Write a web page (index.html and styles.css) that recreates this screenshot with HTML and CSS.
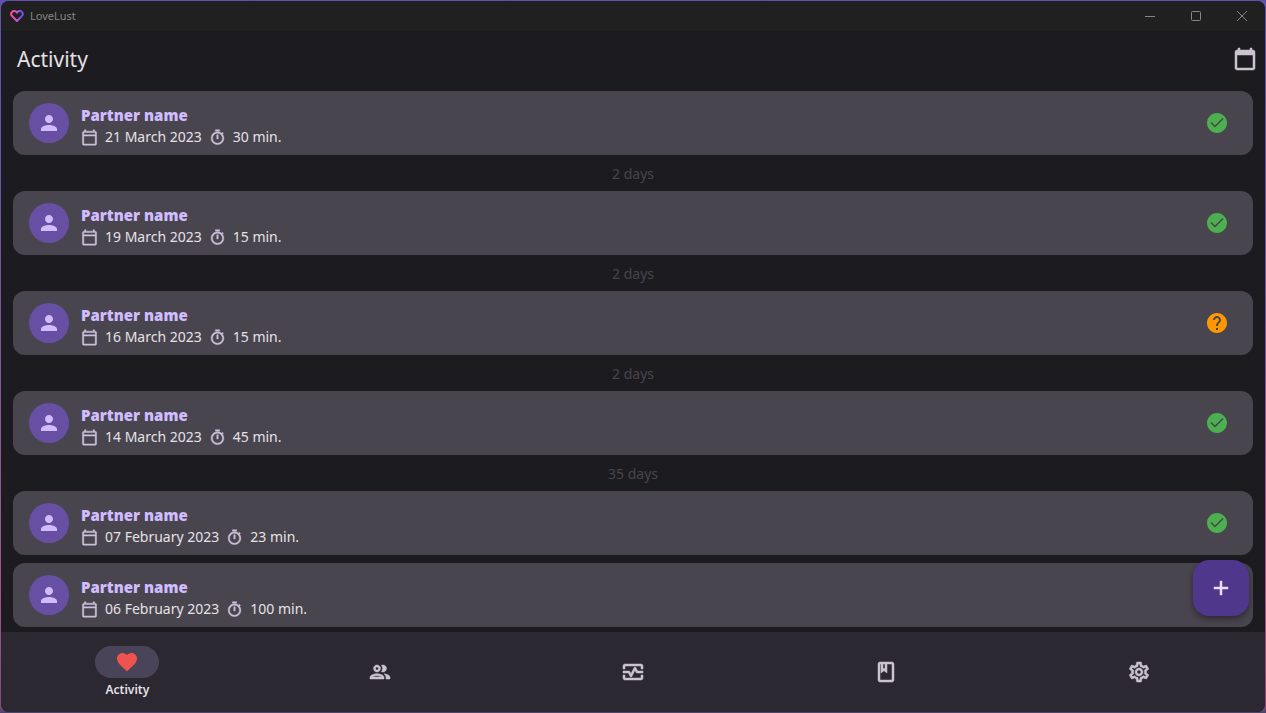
FILE: index.html
```
<!DOCTYPE html>
<html lang="en">
<head>
<meta charset="utf-8">
<title>LoveLust</title>
<link rel="stylesheet" href="styles.css">
</head>
<body>
<svg class="sprite" aria-hidden="true">
  <defs>
    <linearGradient id="logo-tint" x1="0" y1="0" x2="1" y2="0">
      <stop offset="0" stop-color="#ff4f9a"/>
      <stop offset="0.5" stop-color="#c850d8"/>
      <stop offset="1" stop-color="#5b55e8"/>
    </linearGradient>
    <symbol id="person" viewBox="0 0 24 24"><path d="M12 12c2.21 0 4-1.79 4-4s-1.79-4-4-4-4 1.79-4 4 1.79 4 4 4zm0 2c-2.67 0-8 1.34-8 4v2h16v-2c0-2.66-5.33-4-8-4z"/></symbol>
    <symbol id="calendar" viewBox="0 0 24 24"><path d="M20 3h-1V1h-2v2H7V1H5v2H4c-1.1 0-2 .9-2 2v16c0 1.1.9 2 2 2h16c1.1 0 2-.9 2-2V5c0-1.1-.9-2-2-2zm0 18H4V8h16v13z"/></symbol>
    <symbol id="date" viewBox="0 0 24 24"><path d="M20 3h-1V1h-2v2H7V1H5v2H4c-1.1 0-2 .9-2 2v16c0 1.1.9 2 2 2h16c1.1 0 2-.9 2-2V5c0-1.1-.9-2-2-2zm0 18H4V10h16v11zm0-13H4V5h16v3z"/></symbol>
    <symbol id="timer" viewBox="0 0 24 24"><path d="M15 1H9v2h6V1zm-4 13h2V8h-2v6zm8.03-6.61l1.42-1.42c-.43-.51-.9-.99-1.41-1.41l-1.42 1.42C16.07 4.74 14.12 4 12 4c-4.97 0-9 4.03-9 9s4.02 9 9 9 9-4.03 9-9c0-2.12-.74-4.07-1.97-5.61zM12 20c-3.87 0-7-3.13-7-7s3.13-7 7-7 7 3.13 7 7-3.13 7-7 7z"/></symbol>
    <symbol id="check" viewBox="0 0 24 24"><path d="M12 2C6.480 2 2 6.480 2 12s4.480 10 10 10 10-4.480 10-10S17.520 2 12 2zM10 16.500l-4.500-4.500 1.060-1.060L10 14.380l7.440-7.440L18.500 8l-8.500 8.500z"/></symbol>
    <symbol id="help" viewBox="0 0 24 24"><path d="M12 2C6.48 2 2 6.48 2 12s4.48 10 10 10 10-4.48 10-10S17.52 2 12 2zm1 17h-2v-2h2v2zm2.07-7.75l-.9.92C13.45 12.9 13 13.5 13 15h-2v-.5c0-1.1.45-2.1 1.17-2.83l1.24-1.26c.37-.36.59-.86.59-1.41 0-1.1-.9-2-2-2s-2 .9-2 2H8c0-2.21 1.79-4 4-4s4 1.79 4 4c0 .88-.36 1.68-.93 2.25z"/></symbol>
    <symbol id="heart" viewBox="0 0 24 24"><path d="M12 21.35l-1.45-1.32C5.4 15.36 2 12.28 2 8.5 2 5.42 4.42 3 7.5 3c1.74 0 3.41.81 4.5 2.09C13.09 3.81 14.76 3 16.5 3 19.58 3 22 5.42 22 8.5c0 3.78-3.4 6.86-8.55 11.54L12 21.35z"/></symbol>
    <symbol id="people" viewBox="0 0 24 24"><path d="M9 13.75c-2.34 0-7 1.17-7 3.5V19h14v-1.75c0-2.33-4.66-3.5-7-3.5zM4.34 17c.84-.58 2.87-1.25 4.66-1.25s3.82.67 4.66 1.25H4.34zM9 12c1.93 0 3.5-1.57 3.5-3.5S10.93 5 9 5 5.5 6.57 5.5 8.5 7.07 12 9 12zm0-5c.83 0 1.5.67 1.5 1.5S9.83 10 9 10s-1.5-.67-1.5-1.5S8.17 7 9 7zm7.04 6.81c1.16.84 1.96 1.96 1.96 3.44V19h4v-1.75c0-2.02-3.5-3.17-5.96-3.44zM15 12c1.93 0 3.5-1.57 3.5-3.5S16.93 5 15 5c-.54 0-1.04.13-1.5.35.63.89 1 1.98 1 3.15s-.37 2.26-1 3.15c.46.22.96.35 1.5.35z"/></symbol>
    <symbol id="monitor" viewBox="0 0 24 24"><path d="M20 4H4c-1.1 0-2 .9-2 2v3h2V6h16v3h2V6c0-1.1-.9-2-2-2zm0 14H4v-3H2v3c0 1.1.9 2 2 2h16c1.1 0 2-.9 2-2v-3h-2v3z"/><path d="M14.89 7.55c-.34-.68-1.45-.68-1.79 0L10 13.76l-1.11-2.21A.988.988 0 0 0 8 11H2v2h5.38l1.72 3.45c.18.34.52.55.9.55s.72-.21.89-.55L14 10.24l1.11 2.21c.17.34.51.55.89.55h6v-2h-5.38l-1.73-3.45z"/></symbol>
    <symbol id="book" viewBox="0 0 24 24"><path d="M18 2H6c-1.1 0-2 .9-2 2v16c0 1.1.9 2 2 2h12c1.1 0 2-.9 2-2V4c0-1.1-.9-2-2-2zM9 4h2v5l-1-.75L9 9V4zm9 16H6V4h1v9l3-2.25L13 13V4h5v16z"/></symbol>
    <symbol id="settings" viewBox="0 0 24 24"><path d="M19.43 12.98c.04-.32.07-.64.07-.98 0-.34-.03-.66-.07-.98l2.11-1.65c.19-.15.24-.42.12-.64l-2-3.46c-.09-.16-.26-.25-.44-.25-.06 0-.12.01-.17.03l-2.49 1c-.52-.4-1.08-.73-1.69-.98l-.38-2.65C14.46 2.18 14.25 2 14 2h-4c-.25 0-.46.18-.49.42l-.38 2.65c-.61.25-1.17.59-1.69.98l-2.49-1c-.06-.02-.12-.03-.18-.03-.17 0-.34.09-.43.25l-2 3.46c-.13.22-.07.49.12.64l2.11 1.65c-.04.32-.07.65-.07.98 0 .33.03.66.07.98l-2.11 1.65c-.19.15-.24.42-.12.64l2 3.46c.09.16.26.25.44.25.06 0 .12-.01.17-.03l2.49-1c.52.4 1.08.73 1.69.98l.38 2.65c.03.24.24.42.49.42h4c.25 0 .46-.18.49-.42l.38-2.65c.61-.25 1.17-.59 1.69-.98l2.49 1c.06.02.12.03.18.03.17 0 .34-.09.43-.25l2-3.46c.12-.22.07-.49-.12-.64l-2.11-1.65zm-1.98-1.71c.04.31.05.52.05.73 0 .21-.02.43-.05.73l-.14 1.13.89.7 1.08.84-.7 1.21-1.27-.51-1.04-.42-.9.68c-.43.32-.84.56-1.25.73l-1.06.43-.16 1.13-.2 1.35h-1.4l-.19-1.35-.16-1.13-1.06-.43c-.43-.18-.83-.41-1.23-.71l-.91-.7-1.06.43-1.27.51-.7-1.21 1.08-.84.89-.7-.14-1.13c-.03-.31-.05-.54-.05-.74s.02-.43.05-.73l.14-1.13-.89-.7-1.08-.84.7-1.21 1.27.51 1.04.42.9-.68c.43-.32.84-.56 1.25-.73l1.06-.43.16-1.13.2-1.35h1.39l.19 1.35.16 1.13 1.06.43c.43.18.83.41 1.23.71l.91.7 1.06-.43 1.27-.51.7 1.21-1.07.85-.89.7.14 1.13zM12 8c-2.21 0-4 1.79-4 4s1.79 4 4 4 4-1.79 4-4-1.79-4-4-4zm0 6c-1.1 0-2-.9-2-2s.9-2 2-2 2 .9 2 2-.9 2-2 2z"/></symbol>
    <symbol id="plus" viewBox="0 0 24 24"><path d="M19 13h-6v6h-2v-6H5v-2h6V5h2v6h6v2z"/></symbol>
  </defs>
</svg>

<div class="window">
  <div class="titlebar">
    <svg class="logo" viewBox="0 0 14 14" aria-hidden="true"><path d="M7 12 2.4 7.4C1 6 1 4 2.1 2.9 3.4 1.6 5.6 1.8 7 3.6 8.4 1.8 10.6 1.6 11.9 2.9 13 4 13 6 11.6 7.4Z" fill="none" stroke="url(#logo-tint)" stroke-width="2" stroke-linejoin="round"/></svg>
    <span class="app-name">LoveLust</span>
    <div class="window-controls">
      <button type="button" aria-label="Minimize"><svg viewBox="0 0 10 10"><path d="M0 5.5h10"/></svg></button>
      <button type="button" aria-label="Maximize"><svg viewBox="0 0 10 10"><rect x=".5" y=".5" width="9" height="9" rx="1"/></svg></button>
      <button type="button" aria-label="Close"><svg viewBox="0 0 10 10"><path d="M0 0l10 10M10 0 0 10"/></svg></button>
    </div>
  </div>

  <header class="header">
    <h1>Activity</h1>
    <button type="button" class="icon-button" aria-label="Calendar"><svg class="icon heavy"><use href="#calendar"/></svg></button>
  </header>

  <main class="feed">
    <article class="card">
      <span class="avatar"><svg class="icon"><use href="#person"/></svg></span>
      <div class="details">
        <h2>Partner name</h2>
        <p class="meta"><svg class="icon-small"><use href="#date"/></svg><span>21 March 2023</span><svg class="icon-small"><use href="#timer"/></svg><span>30 min.</span></p>
      </div>
      <svg class="icon status safe"><use href="#check"/></svg>
    </article>
    <p class="gap">2 days</p>
    <article class="card">
      <span class="avatar"><svg class="icon"><use href="#person"/></svg></span>
      <div class="details">
        <h2>Partner name</h2>
        <p class="meta"><svg class="icon-small"><use href="#date"/></svg><span>19 March 2023</span><svg class="icon-small"><use href="#timer"/></svg><span>15 min.</span></p>
      </div>
      <svg class="icon status safe"><use href="#check"/></svg>
    </article>
    <p class="gap">2 days</p>
    <article class="card">
      <span class="avatar"><svg class="icon"><use href="#person"/></svg></span>
      <div class="details">
        <h2>Partner name</h2>
        <p class="meta"><svg class="icon-small"><use href="#date"/></svg><span>16 March 2023</span><svg class="icon-small"><use href="#timer"/></svg><span>15 min.</span></p>
      </div>
      <svg class="icon status unsure"><use href="#help"/></svg>
    </article>
    <p class="gap">2 days</p>
    <article class="card">
      <span class="avatar"><svg class="icon"><use href="#person"/></svg></span>
      <div class="details">
        <h2>Partner name</h2>
        <p class="meta"><svg class="icon-small"><use href="#date"/></svg><span>14 March 2023</span><svg class="icon-small"><use href="#timer"/></svg><span>45 min.</span></p>
      </div>
      <svg class="icon status safe"><use href="#check"/></svg>
    </article>
    <p class="gap">35 days</p>
    <article class="card">
      <span class="avatar"><svg class="icon"><use href="#person"/></svg></span>
      <div class="details">
        <h2>Partner name</h2>
        <p class="meta"><svg class="icon-small"><use href="#date"/></svg><span>07 February 2023</span><svg class="icon-small"><use href="#timer"/></svg><span>23 min.</span></p>
      </div>
      <svg class="icon status safe"><use href="#check"/></svg>
    </article>
    <article class="card">
      <span class="avatar"><svg class="icon"><use href="#person"/></svg></span>
      <div class="details">
        <h2>Partner name</h2>
        <p class="meta"><svg class="icon-small"><use href="#date"/></svg><span>06 February 2023</span><svg class="icon-small"><use href="#timer"/></svg><span>100 min.</span></p>
      </div>
    </article>
  </main>

  <div class="bottom">
    <button type="button" class="fab" aria-label="Add activity"><svg class="icon heavy"><use href="#plus"/></svg></button>
    <nav class="nav">
      <a href="#activity" class="active" aria-current="page"><span class="pill"><svg class="icon"><use href="#heart"/></svg></span><span class="label">Activity</span></a>
      <a href="#partners" aria-label="Partners"><svg class="icon heavy"><use href="#people"/></svg></a>
      <a href="#stats" aria-label="Statistics"><svg class="icon heavy"><use href="#monitor"/></svg></a>
      <a href="#learn" aria-label="Learn"><svg class="icon heavy"><use href="#book"/></svg></a>
      <a href="#preferences" aria-label="Settings"><svg class="icon heavy"><use href="#settings"/></svg></a>
    </nav>
  </div>
</div>
</body>
</html>
```
FILE: styles.css
```
* {
  box-sizing: border-box;
}

body {
  margin: 0;
  height: 100vh;
  padding: 1px;
  background: linear-gradient(180deg, #5f50b0 0%, #75599f 45%, #a5568a 80%, #8a4a78 99%, #4a4468 100%);
  color: #e6e1e5;
  font: 14px/20px "Noto Sans", "Open Sans", sans-serif;
}

h1, h2, p {
  margin: 0;
  font-weight: 400;
}

button {
  display: flex;
  align-items: center;
  justify-content: center;
  padding: 0;
  border: 0;
  background: none;
  color: inherit;
}

.sprite {
  position: absolute;
  width: 0;
  height: 0;
}

.icon {
  width: 24px;
  height: 24px;
  flex: none;
  fill: currentColor;
}

.heavy {
  stroke: currentColor;
  stroke-width: 0.5;
}

.icon-small {
  width: 17px;
  height: 17px;
  flex: none;
  fill: #ccc2dc;
  stroke: #ccc2dc;
  stroke-width: 0.6;
}

.window {
  display: flex;
  flex-direction: column;
  height: 100%;
  overflow: hidden;
  border-radius: 8px;
  background: #1c1b1f;
}

.titlebar {
  display: flex;
  flex: none;
  align-items: center;
  height: 30px;
  padding-left: 9px;
  background: #202020;
  color: #868686;
  font-size: 11px;
}

.logo {
  width: 14px;
  height: 14px;
  margin-right: 6px;
}

.window-controls {
  display: flex;
  margin-left: auto;
}

.window-controls button {
  width: 46px;
  height: 30px;
}

.window-controls svg {
  width: 10px;
  height: 10px;
  overflow: visible;
  fill: none;
  stroke: #868686;
}

.header {
  display: flex;
  flex: none;
  align-items: center;
  justify-content: space-between;
  height: 56px;
  padding: 0 8px 0 16px;
}

.header h1 {
  font-size: 21px;
  line-height: 28px;
}

.icon-button {
  color: #cac4d0;
}

.feed {
  flex: 1;
  min-height: 0;
  padding: 4px 12px;
  overflow: hidden;
}

.card {
  display: flex;
  height: 64px;
  padding: 12px 24px 12px 16px;
  border-radius: 12px;
  background: #49454f;
}

.card + .card {
  margin-top: 8px;
}

.avatar {
  display: flex;
  flex: none;
  align-items: center;
  justify-content: center;
  width: 40px;
  height: 40px;
  margin-right: 12px;
  border-radius: 50%;
  background: #6750a4;
  color: #d0bcff;
}

.details {
  flex: 1;
}

.details h2 {
  color: #d0bcff;
  font-family: "Open Sans", "Noto Sans", sans-serif;
  font-size: 15px;
  font-weight: 800;
  line-height: 24px;
}

.meta {
  display: flex;
  align-items: center;
  gap: 7px;
  line-height: 20px;
}

.status {
  align-self: center;
}

.safe {
  color: #4caf50;
}

.unsure {
  color: #ff9800;
}

.gap {
  padding-top: 2px;
  color: #49454f;
  line-height: 34px;
  text-align: center;
}

.bottom {
  position: relative;
  flex: none;
}

.fab {
  position: absolute;
  right: 16px;
  bottom: 96px;
  width: 56px;
  height: 56px;
  border-radius: 16px;
  background: #4f378b;
  box-shadow: 0 3px 6px rgba(0, 0, 0, 0.4);
  color: #eaddff;
}

.nav {
  display: grid;
  grid-template-columns: repeat(5, 1fr);
  height: 80px;
  background: #2b2831;
}

.nav a {
  display: flex;
  flex-direction: column;
  align-items: center;
  justify-content: center;
  gap: 4px;
  color: #cac4d0;
  text-decoration: none;
}

.pill {
  display: flex;
  align-items: center;
  justify-content: center;
  width: 64px;
  height: 32px;
  border-radius: 16px;
  background: #4a4458;
  color: #ef5350;
}

.label {
  color: #e6e1e5;
  font-size: 12px;
  font-weight: 600;
  line-height: 16px;
}
```
